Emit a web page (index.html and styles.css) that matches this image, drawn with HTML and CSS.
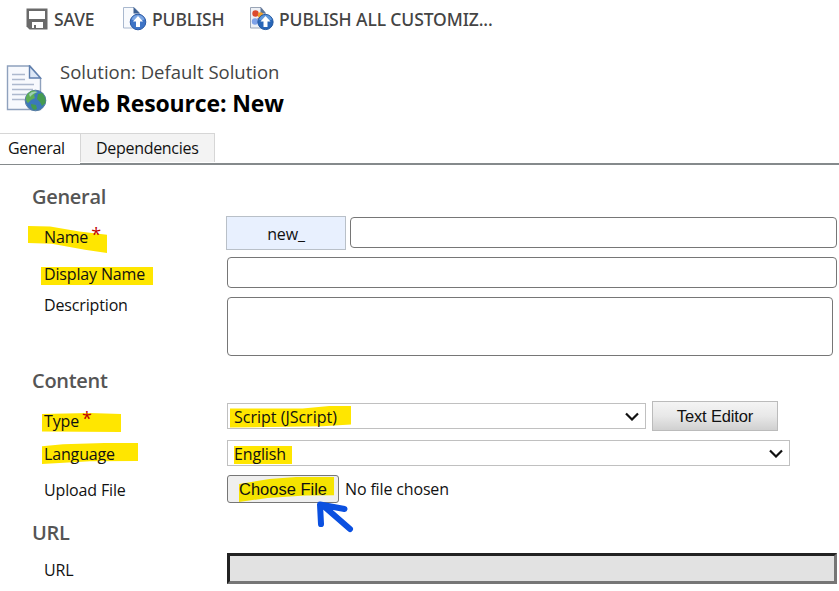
FILE: index.html
```html
<!DOCTYPE html>
<html lang="en">
<head>
    <meta charset="UTF-8">
    <meta name="viewport" content="width=device-width, initial-scale=1.0">
    <title>Web Resource: New</title>
    <link rel="stylesheet" href="styles.css">
</head>
<body>
    <div class="toolbar">
        <div class="tool save">
            <svg width="22" height="22" viewBox="0 0 22 22">
                <path d="M0.500 0.500H21.500V21.500H3.500L0.500 18.500Z" fill="#6a6a6a"/>
                <path d="M3 3H19V11H3ZM6 14H17V20H10V17H8V20H6Z" fill="#fff"/>
            </svg>
            <span>SAVE</span>
        </div>
        <div class="tool publish">
            <svg width="26" height="25" viewBox="0 0 26 25">
                <path d="M1.500 1.500H12L17 6.500V22H1.500Z" fill="#f8fafd" stroke="#a9b8ce"/>
                <path d="M11.500 1L18 7.500H11.500Z" fill="#3c5f92"/>
                <circle cx="16" cy="16" r="7.800" fill="#3f74c6" stroke="#2c5aa5"/>
                <path d="M9.500 13.500A7 7 0 0 1 22.500 13.500Q16 16.500 9.500 13.500Z" fill="#7aa5e2"/>
                <path d="M16 10L21 15.500H18V21H14V15.500H11Z" fill="#fff"/>
            </svg>
            <span>PUBLISH</span>
        </div>
        <div class="tool publish-all">
            <svg width="26" height="25" viewBox="0 0 26 25">
                <path d="M1.500 1.500H12L16 6.500V22H1.500Z" fill="#eef1f6" stroke="#9aa5b6"/>
                <path d="M11.500 1L17 7.500H11.500Z" fill="#5d7498"/>
                <path d="M6 7L12 10L6 15" fill="none" stroke="#b77" />
                <circle cx="6.500" cy="7.500" r="3.200" fill="#db4a2d"/>
                <circle cx="11.500" cy="9" r="2.700" fill="#f0a02c"/>
                <circle cx="6" cy="15.500" r="3.200" fill="#7ea2e8"/>
                <circle cx="16.500" cy="16" r="7.600" fill="#2866b8" stroke="#1f559f"/>
                <path d="M10 13.500A7 7 0 0 1 23 13.500Q16.500 16.500 10 13.500Z" fill="#5f97da"/>
                <path d="M16.500 10L21.500 15.500H18.500V21H14.500V15.500H11.500Z" fill="#fff"/>
            </svg>
            <span>PUBLISH ALL CUSTOMIZ...</span>
        </div>
    </div>

    <div class="header">
        <svg width="42" height="48" viewBox="0 0 42 48">
            <path d="M1.500 1H24L34.500 13V44.500H1.500Z" fill="#f7f9fd" stroke="#8fa1bd" stroke-width="1.400"/>
            <path d="M23.500 1V13H34.500Z" fill="#dce7f6" stroke="#5f7fae" stroke-width="1.400"/>
            <path d="M6 9.500H19M6 14.500H19M6 19.500H28M6 24.500H27M6 29.500H22M6 34.500H20" stroke="#adb9ce" stroke-width="1.400"/>
            <circle cx="29.500" cy="35.500" r="10.300" fill="#3b78bb" stroke="#547b9e"/>
            <path d="M20 32Q22 26 28 25.500L31 27L28 30L29 33L25 35L22 38Q19.500 36 20 32Z" fill="#5fae55"/>
            <path d="M32 29L36 28Q40 32 39.500 38L36 41L34 37L31 34ZM25 39L30 40L31 44L28 45Q25 43 25 39Z" fill="#459b50"/>
            <path d="M23 29Q27 25.500 32 27Q27 28 24 32Z" fill="#b9dfe0" opacity=".7"/>
        </svg>
        <div class="titles">
            <div class="solution">Solution: Default Solution</div>
            <h1>Web Resource: New</h1>
        </div>
    </div>

    <div class="tabs">
        <div class="tab active">General</div>
        <div class="tab inactive">Dependencies</div>
    </div>

    <div class="form">
        <h2 class="first">General</h2>
        <div class="row name-row">
            <label><span class="mark mark-name">Name</span><span class="required">*</span></label>
            <div class="prefix">new_</div>
            <div class="input"></div>
        </div>
        <div class="row display-row">
            <label><span class="mark mark-display">Display Name</span></label>
            <div class="input"></div>
        </div>
        <div class="row description-row">
            <label>Description</label>
            <div class="input"></div>
        </div>

        <h2 class="content-title">Content</h2>
        <div class="row type-row">
            <label><span class="mark mark-type">Type</span><span class="required">*</span></label>
            <div class="select">
                <span class="mark mark-script">Script (JScript)</span>
                <svg width="14" height="9" viewBox="0 0 14 9"><path d="M1 1.500L7 7.500L13 1.500" fill="none" stroke="#111" stroke-width="2.200"/></svg>
            </div>
            <div class="editor-button">Text Editor</div>
        </div>
        <div class="row language-row">
            <label><span class="mark mark-language">Language</span></label>
            <div class="select">
                <span class="mark mark-english">English</span>
                <svg width="14" height="9" viewBox="0 0 14 9"><path d="M1 1.500L7 7.500L13 1.500" fill="none" stroke="#111" stroke-width="2.200"/></svg>
            </div>
        </div>
        <div class="row upload-row">
            <label>Upload File</label>
            <div class="file-button">
                <span class="mark mark-file">Choose File</span>
                <svg class="arrow" width="40" height="34" viewBox="0 0 40 34">
                    <path d="M35 29L8 5.500M29.500 9L5 4.500L6 24" fill="none" stroke="#0b50e0" stroke-width="6" stroke-linecap="round" stroke-linejoin="round"/>
                </svg>
            </div>
            <span class="file-name">No file chosen</span>
        </div>

        <h2 class="url-title">URL</h2>
        <div class="row url-row">
            <label>URL</label>
            <div class="url-input"></div>
        </div>
    </div>
</body>
</html>
```
FILE: styles.css
```css
* {
    box-sizing: border-box;
}

body {
    margin: 0;
    height: 591px;
    overflow: hidden;
    background-color: #fff;
    color: #111;
    font-family: "Open Sans", "Noto Sans", sans-serif;
    font-size: 16px;
    letter-spacing: -0.15px;
    line-height: 20px;
    white-space: nowrap;
}

svg {
    display: block;
    flex: none;
}

.toolbar {
    display: flex;
    height: 37px;
    padding-left: 26px;
    color: #444;
    font-family: "Noto Sans", "Open Sans", sans-serif;
    font-size: 17.5px;
    font-weight: 500;
    letter-spacing: -0.1px;
}

.tool {
    display: flex;
    align-items: center;
    gap: 6px;
}

.save {
    width: 96px;
}

.publish {
    width: 127px;
    gap: 4px;
}

.publish-all {
    gap: 4px;
}

.header {
    display: flex;
    height: 96px;
    padding: 28px 0 0 6px;
    gap: 12px;
}

.titles {
    margin-top: -2px;
}

.solution {
    color: #444;
    font-size: 18.5px;
    letter-spacing: 0;
    line-height: 18px;
}

h1 {
    margin: 8px 0 0;
    color: #000;
    font-size: 23px;
    font-weight: 700;
    line-height: 28px;
}

.tabs {
    display: flex;
    height: 32px;
    background: linear-gradient(#858a8c, #858a8c) left bottom / 100% 2px no-repeat;
}

.tab {
    border-top: 1px solid #d6d6d6;
    letter-spacing: -0.3px;
    line-height: 28px;
}

.active {
    width: 80px;
    padding-left: 8px;
    background-color: #fff;
    border-bottom: 1px solid #858a8c;
}

.inactive {
    width: 135px;
    height: 29px;
    padding-left: 15px;
    border-right: 1px solid #d6d6d6;
    border-left: 1px solid #d6d6d6;
    background-color: #f3f3f3;
}

h2 {
    margin: 0 0 0 32px;
    color: #555;
    font-size: 20px;
    font-weight: 600;
    letter-spacing: -0.3px;
    line-height: 26px;
}

.first {
    margin-top: 19px;
    margin-bottom: 6px;
}

.row {
    display: flex;
    padding-right: 2px;
}

label {
    flex: none;
    width: 227px;
    padding-left: 44px;
}

.input {
    flex: 1;
    border: 1px solid #767676;
    border-radius: 4px;
}

.required {
    position: relative;
    top: -2px;
    margin-left: 3px;
    color: #c00000;
    font-size: 18px;
    line-height: 16px;
}

/* highlighter strokes, drawn behind the words */
.mark {
    position: relative;
    isolation: isolate;
}

.mark::before {
    content: "";
    position: absolute;
    z-index: -1;
    background-color: #ffe600;
}

.mark-name::before {
    left: -16px;
    top: 0;
    width: 79px;
    height: 27px;
    clip-path: polygon(0 0, 28% 2%, 65% 20%, 100% 32%, 100% 100%, 72% 88%, 30% 66%, 0 63%);
}

.mark-display::before {
    left: -3px;
    top: 4px;
    width: 112px;
    height: 18px;
}

.mark-type::before {
    left: -2px;
    top: 3px;
    width: 79px;
    height: 19px;
    clip-path: polygon(0 5%, 60% 0, 100% 5%, 100% 100%, 0 97%);
}

.mark-language::before {
    left: -2px;
    top: 0;
    width: 96px;
    height: 21px;
    clip-path: polygon(0 16%, 22% 6%, 65% 0, 100% 0, 100% 86%, 50% 87%, 0 100%);
}

.mark-script {
    letter-spacing: 0;
}

.mark-script::before {
    left: -4px;
    top: -1px;
    width: 121px;
    height: 22px;
    clip-path: polygon(0 14%, 60% 14%, 82% 2%, 100% 0, 100% 86%, 76% 94%, 0 100%);
}

.mark-english::before {
    left: 0;
    top: 2px;
    width: 58px;
    height: 18px;
}

.mark-file::before {
    left: 0;
    top: -3px;
    width: 95px;
    height: 25px;
    background-color: #f5e400;
    clip-path: polygon(0 28%, 32% 8%, 60% 0, 100% 0, 100% 73%, 70% 74%, 30% 84%, 0 100%);
}

.name-row {
    height: 34px;
    margin-bottom: 7px;
}

.name-row label {
    width: 226px;
    padding-top: 11px;
}

.name-row .input {
    height: 31px;
    margin-top: 1px;
}

.prefix {
    width: 120px;
    margin-right: 4px;
    border: 1px solid #b9c0c8;
    background-color: #e8f0fe;
    line-height: 34px;
    text-align: center;
}

.display-row {
    height: 31px;
    margin-bottom: 9px;
}

.display-row label {
    padding-top: 7px;
}

.description-row {
    height: 59px;
    padding-right: 6px;
}

.description-row label {
    margin-top: -2px;
}

.content-title {
    margin-top: 12px;
    margin-bottom: 7px;
}

.type-row {
    height: 30px;
    margin-bottom: 9px;
}

.type-row label {
    padding-top: 10px;
}

.select {
    display: flex;
    align-items: center;
    justify-content: space-between;
    width: 419px;
    height: 26px;
    margin-top: 2px;
    padding: 1px 6px 0;
    border: 1px solid #c0c0c0;
}

.editor-button {
    width: 126px;
    margin-left: 6px;
    border: 1px solid #bbb;
    background: linear-gradient(#f4f4f4, #e8e8e8 50%, #d0d0d0);
    font-family: "Liberation Sans", Arial, sans-serif;
    font-size: 16.5px;
    line-height: 29px;
    text-align: center;
}

.language-row {
    height: 26px;
    margin-bottom: 9px;
}

.language-row label {
    padding-top: 4px;
}

.language-row .select {
    width: 563px;
    margin-top: 0;
}

.upload-row {
    height: 28px;
}

.upload-row label {
    padding-top: 5px;
}

.file-button {
    position: relative;
    width: 112px;
    padding-left: 11px;
    border: 1px solid #767676;
    border-radius: 3px;
    background-color: #efefef;
    font-family: "Liberation Sans", Arial, sans-serif;
    font-size: 16.5px;
    letter-spacing: 0;
    line-height: 26px;
}

.arrow {
    position: absolute;
    left: 87px;
    top: 24px;
}

.file-name {
    margin-left: 6px;
    line-height: 28px;
}

.url-title {
    margin-top: 17px;
    margin-bottom: 7px;
}

.url-row label {
    padding-top: 7px;
}

.url-input {
    flex: 1;
    height: 31px;
    border: 3px solid;
    border-color: #222 #767676 #767676 #222;
    background-color: #e2e2e2;
}
```
